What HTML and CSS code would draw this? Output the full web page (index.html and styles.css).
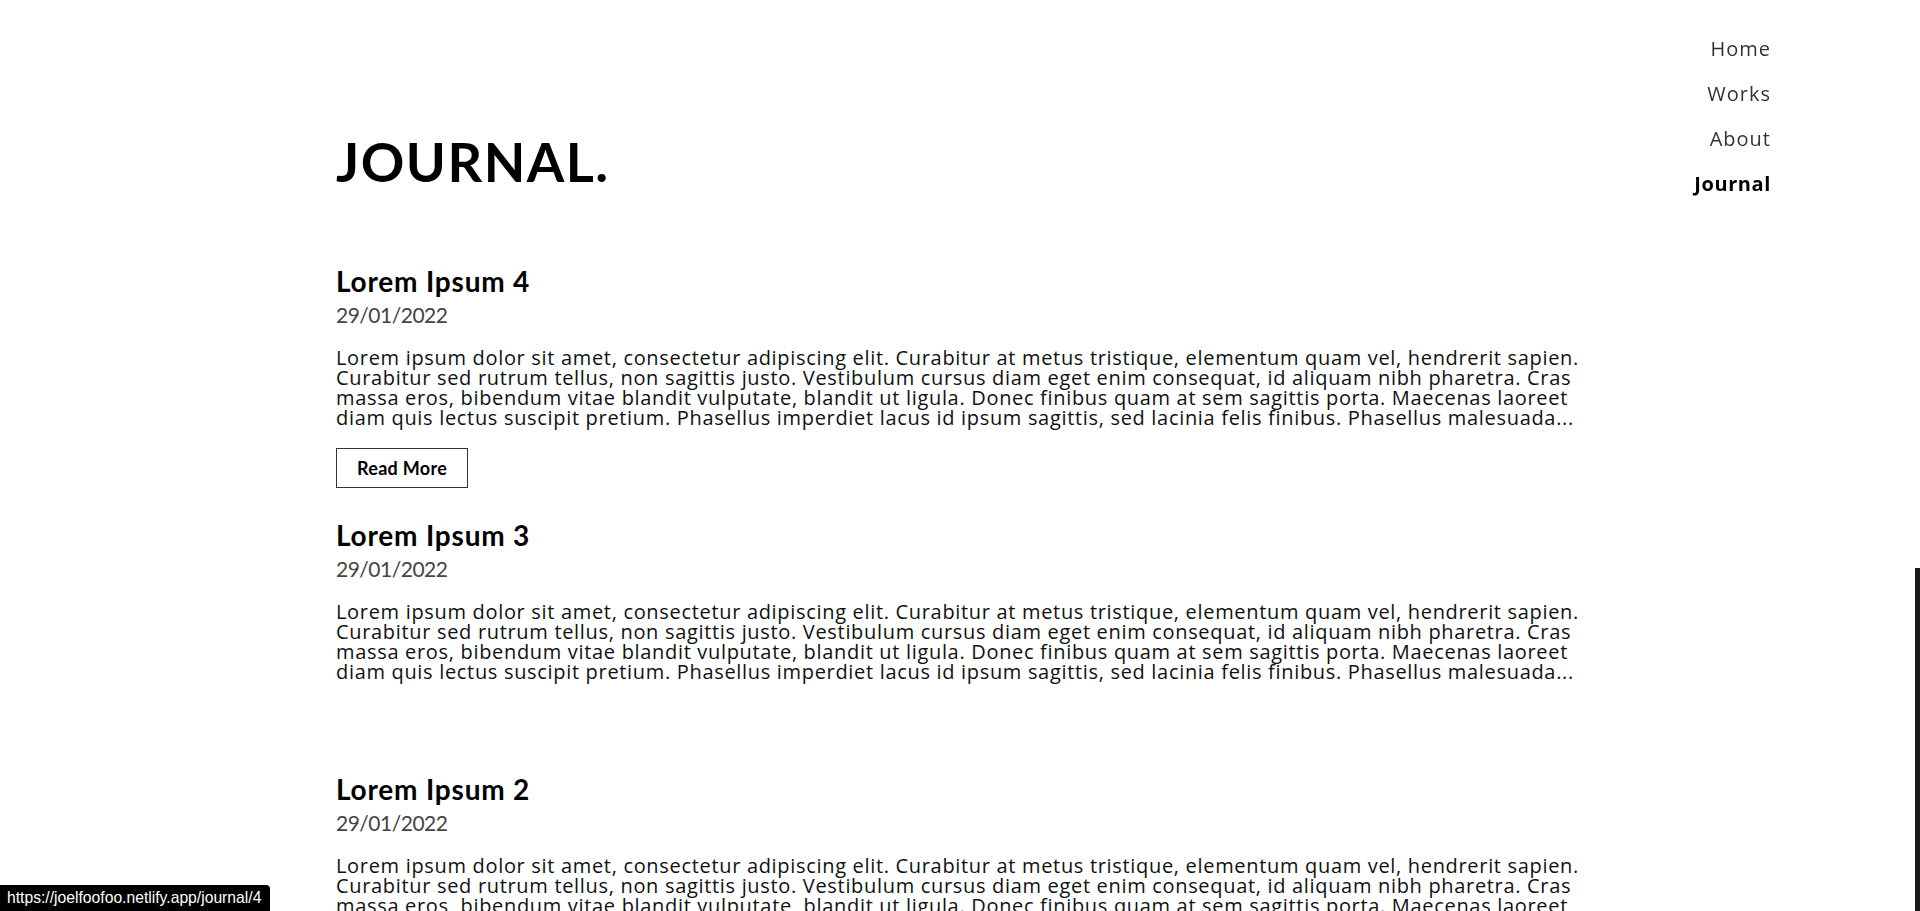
FILE: index.html
```html
<!DOCTYPE html>
<html lang="en">
<head>
<meta charset="utf-8">
<title>Journal</title>
<link rel="stylesheet" href="styles.css">
</head>
<body>
<nav class="site-nav">
  <a class="nav-link" href="#">Home</a>
  <a class="nav-link" href="#">Works</a>
  <a class="nav-link" href="#">About</a>
  <a class="nav-link nav-link-active" href="#">Journal</a>
</nav>
<main class="page">
  <h1 class="page-title">JOURNAL.</h1>
  <article class="entry entry-hover">
    <h2 class="entry-title">Lorem Ipsum 4</h2>
    <div class="entry-date">29/01/2022</div>
    <p class="entry-text">Lorem ipsum dolor sit amet, consectetur adipiscing elit. Curabitur at metus tristique, elementum quam vel, hendrerit sapien. Curabitur sed rutrum tellus, non sagittis justo. Vestibulum cursus diam eget enim consequat, id aliquam nibh pharetra. Cras massa eros, bibendum vitae blandit vulputate, blandit ut ligula. Donec finibus quam at sem sagittis porta. Maecenas laoreet diam quis lectus suscipit pretium. Phasellus imperdiet lacus id ipsum sagittis, sed lacinia felis finibus. Phasellus malesuada...</p>
    <a class="read-more" href="#">Read More</a>
  </article>
  <article class="entry">
    <h2 class="entry-title">Lorem Ipsum 3</h2>
    <div class="entry-date">29/01/2022</div>
    <p class="entry-text">Lorem ipsum dolor sit amet, consectetur adipiscing elit. Curabitur at metus tristique, elementum quam vel, hendrerit sapien. Curabitur sed rutrum tellus, non sagittis justo. Vestibulum cursus diam eget enim consequat, id aliquam nibh pharetra. Cras massa eros, bibendum vitae blandit vulputate, blandit ut ligula. Donec finibus quam at sem sagittis porta. Maecenas laoreet diam quis lectus suscipit pretium. Phasellus imperdiet lacus id ipsum sagittis, sed lacinia felis finibus. Phasellus malesuada...</p>
    <a class="read-more" href="#">Read More</a>
  </article>
  <article class="entry">
    <h2 class="entry-title">Lorem Ipsum 2</h2>
    <div class="entry-date">29/01/2022</div>
    <p class="entry-text">Lorem ipsum dolor sit amet, consectetur adipiscing elit. Curabitur at metus tristique, elementum quam vel, hendrerit sapien. Curabitur sed rutrum tellus, non sagittis justo. Vestibulum cursus diam eget enim consequat, id aliquam nibh pharetra. Cras massa eros, bibendum vitae blandit vulputate, blandit ut ligula. Donec finibus quam at sem sagittis porta. Maecenas laoreet diam quis lectus suscipit pretium. Phasellus imperdiet lacus id ipsum sagittis, sed lacinia felis finibus. Phasellus malesuada...</p>
    <a class="read-more" href="#">Read More</a>
  </article>
</main>
<div class="status-bubble">https://joelfoofoo.netlify.app/journal/4</div>
<div class="scroll-thumb"></div>
</body>
</html>
```
FILE: styles.css
```css
html {
  overflow: hidden;
  height: 100%;
}
body {
  margin: 0;
  background: #ffffff;
  color: #111111;
  font-family: "Open Sans", "DejaVu Sans", sans-serif;
}
.site-nav {
  position: fixed;
  top: 26px;
  right: 149px;
  display: flex;
  flex-direction: column;
  align-items: flex-end;
}
.nav-link {
  display: block;
  font-family: "Open Sans", sans-serif;
  font-size: 20px;
  line-height: 45px;
  letter-spacing: 1px;
  color: #333333;
  text-decoration: none;
}
.nav-link-active {
  font-weight: 700;
  color: #000000;
  letter-spacing: 0.6px;
}
.page {
  width: 65%;
  margin: 0 auto;
  padding-top: 129px;
}
.page-title {
  margin: 0 0 70px;
  font-family: "Lato", sans-serif;
  font-weight: 700;
  font-size: 54px;
  line-height: 65px;
  letter-spacing: 1.5px;
  color: #000000;
}
.entry {
  margin-bottom: 30px;
}
.entry-title {
  margin: 0;
  font-family: "Lato", sans-serif;
  font-weight: 700;
  font-size: 28px;
  line-height: 34px;
  letter-spacing: 0.8px;
  color: #000000;
}
.entry-date {
  margin-top: 4px;
  font-family: "Lato", sans-serif;
  font-size: 21px;
  line-height: 26px;
  letter-spacing: -0.5px;
  color: #444444;
}
.entry-text {
  margin: 20px 0 0;
  font-size: 20px;
  line-height: 20px;
  letter-spacing: 0.68px;
  color: #111111;
}
.read-more {
  display: inline-block;
  box-sizing: border-box;
  margin-top: 20px;
  height: 40px;
  padding: 0 20px;
  border: 1px solid #333333;
  font-family: "Lato", sans-serif;
  font-weight: 700;
  font-size: 18px;
  line-height: 38px;
  letter-spacing: 0.3px;
  color: #000000;
  text-decoration: none;
  visibility: hidden;
}
.entry-hover .read-more {
  visibility: visible;
}
.status-bubble {
  position: fixed;
  left: 0;
  bottom: 0;
  height: 26px;
  padding: 0 9px 0 7px;
  background: #000000;
  color: #ffffff;
  border-top-right-radius: 4px;
  font-family: "Liberation Sans", Arial, sans-serif;
  font-size: 15.7px;
  line-height: 26px;
}
.scroll-thumb {
  position: fixed;
  right: 0;
  top: 568px;
  bottom: 0;
  width: 5px;
  background: #1a1a1a;
}
```
